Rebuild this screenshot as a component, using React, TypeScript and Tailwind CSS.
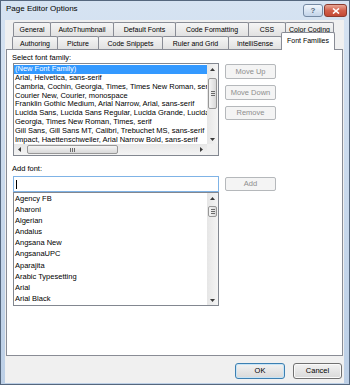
import React from "react";

function Tri({ dir }: { dir: "up" | "down" | "left" | "right" }) {
  if (dir === "up")
    return (
      <svg width="5" height="3" viewBox="0 0 5 3">
        <polygon points="0,3 2.5,0 5,3" fill="#3a3a3a" />
      </svg>
    );
  if (dir === "down")
    return (
      <svg width="5" height="3" viewBox="0 0 5 3">
        <polygon points="0,0 2.5,3 5,0" fill="#3a3a3a" />
      </svg>
    );
  if (dir === "left")
    return (
      <svg width="3" height="5" viewBox="0 0 3 5">
        <polygon points="3,0 0,2.5 3,5" fill="#3a3a3a" />
      </svg>
    );
  return (
    <svg width="3" height="5" viewBox="0 0 3 5">
      <polygon points="0,0 3,2.5 0,5" fill="#3a3a3a" />
    </svg>
  );
}

function VGrip() {
  return (
    <div className="flex flex-col gap-[1px]">
      <div className="w-[4px] h-px bg-[#6b6b6b]" />
      <div className="w-[4px] h-px bg-[#6b6b6b]" />
      <div className="w-[4px] h-px bg-[#6b6b6b]" />
    </div>
  );
}

function HGrip() {
  return (
    <div className="flex gap-[1px]">
      <div className="w-px h-[4px] bg-[#6b6b6b]" />
      <div className="w-px h-[4px] bg-[#6b6b6b]" />
      <div className="w-px h-[4px] bg-[#6b6b6b]" />
    </div>
  );
}

const families = [
  "(New Font Family)",
  "Arial, Helvetica, sans-serif",
  "Cambria, Cochin, Georgia, Times, Times New Roman, serif",
  "Courier New, Courier, monospace",
  "Franklin Gothic Medium,  Arial Narrow, Arial, sans-serif",
  "Lucida Sans, Lucida Sans Regular, Lucida Grande, Lucida Sans Unicode, Verdana, sans-serif",
  "Georgia, Times New Roman, Times, serif",
  "Gill Sans, Gill Sans MT, Calibri, Trebuchet MS, sans-serif",
  "Impact, Haettenschweiler, Arial Narrow Bold, sans-serif",
  "Tahoma, Geneva, sans-serif",
];

const fonts = [
  "Agency FB",
  "Aharoni",
  "Algerian",
  "Andalus",
  "Angsana New",
  "AngsanaUPC",
  "Aparajita",
  "Arabic Typesetting",
  "Arial",
  "Arial Black",
  "Arial Narrow",
];

function Tab({ label, cls }: { label: string; cls: string }) {
  return (
    <div
      className={
        "h-full -ml-px first:ml-0 border-x border-t border-[#898c95] rounded-t-[2px] bg-gradient-to-b from-[#f5f5f5] to-[#e1e1e1] flex items-center justify-center text-[7px] leading-none whitespace-nowrap overflow-hidden " +
        cls
      }
    >
      {label}
    </div>
  );
}

function DisBtn({ label, cls }: { label: string; cls: string }) {
  return (
    <div
      className={
        "w-[51px] border border-[#b5b8bb] rounded-[2px] bg-[#f4f4f4] flex items-center justify-center text-[7.5px] leading-none text-[#8e8e8e] " +
        cls
      }
    >
      {label}
    </div>
  );
}

export default function App() {
  return (
    <div className="w-[350px] h-[385px] flex flex-col border border-[#55677e] bg-gradient-to-b from-[#d6e3f2] to-[#bccfe6] font-['Liberation_Sans',Arial,sans-serif] text-black overflow-hidden">
      {/* Title bar */}
      <div className="h-[19px] flex items-start pl-[5px] pr-[2px]">
        <div className="flex-1 text-[8px] leading-[16px]">Page Editor Options</div>
        <div className="mt-[3px] flex gap-[1px]">
          <div className="w-[20px] h-[13px] rounded-[3px] border border-[#7589a3] bg-gradient-to-b from-[#f1f6fc] to-[#c3d4e9] flex items-center justify-center text-[8px] font-bold text-[#56677c] leading-none">
            ?
          </div>
          <div className="w-[23px] h-[13px] rounded-[3px] border border-[#8c3b2f] bg-gradient-to-b from-[#e8a797] via-[#d2604c] to-[#c34935] flex items-center justify-center">
            <svg width="8" height="6" viewBox="0 0 8 6">
              <path d="M1 0.5 L7 5.5 M7 0.5 L1 5.5" stroke="white" strokeWidth="1.6" />
            </svg>
          </div>
        </div>
      </div>

      {/* Body */}
      <div className="flex-1 ml-[4px] mr-[5px] mb-[1px] bg-[#f0f0f0] flex flex-col">
        {/* Tab row 1 */}
        <div className="flex pl-[8px] mt-[2px] h-[14px]">
          <Tab label="General" cls="w-[38px]" />
          <Tab label="AutoThumbnail" cls="w-[64px]" />
          <Tab label="Default Fonts" cls="w-[63px]" />
          <Tab label="Code Formatting" cls="w-[74px]" />
          <Tab label="CSS" cls="w-[38px]" />
          <Tab label="Color Coding" cls="w-[49px]" />
        </div>
        {/* Tab row 2 */}
        <div className="flex items-start pl-[7px] h-[13px]">
          <Tab label="Authoring" cls="w-[46px]" />
          <Tab label="Picture" cls="w-[42px]" />
          <Tab label="Code Snippets" cls="w-[65px]" />
          <Tab label="Ruler and Grid" cls="w-[67px]" />
          <Tab label="IntelliSense" cls="w-[54px]" />
          <div className="relative z-10 -ml-px w-[54px] h-[18px] -mt-[4px] -mb-px bg-white border-x border-t border-[#898c95] rounded-t-[2px] flex items-center justify-center pb-[3px] text-[7px] leading-none whitespace-nowrap">
            Font Families
          </div>
        </div>

        {/* Panel */}
        <div className="ml-[1px] mr-[1px] h-[307px] border border-[#898c95] bg-white flex flex-col pl-[5px]">
          <div className="h-[13px] pt-[2px] text-[7.5px] leading-[11px]">Select font family:</div>
          <div className="flex items-start">
            {/* Family list */}
            <div className="ml-[1px] w-[206px] h-[93px] border border-[#828790] grid grid-cols-[193px_11px] grid-rows-[80px_11px]">
              <div className="overflow-hidden pt-[1px]">
                {families.map((f, i) => (
                  <div
                    key={f}
                    className={
                      i === 0
                        ? "h-[8.85px] leading-[8.85px] text-[7.5px] whitespace-nowrap overflow-hidden pl-[1px] bg-[#3399ff] text-white"
                        : "h-[8.85px] leading-[8.85px] text-[7.5px] whitespace-nowrap overflow-hidden pl-[1px]"
                    }
                  >
                    {f}
                  </div>
                ))}
              </div>
              <div className="flex flex-col bg-gradient-to-r from-[#e6e6e6] to-[#f4f4f4]">
                <div className="h-[10px] flex items-center justify-center">
                  <Tri dir="up" />
                </div>
                <div className="mt-[4px] mx-[1px] h-[31px] rounded-[2px] border border-[#979797] bg-gradient-to-r from-[#f5f5f5] to-[#d9d9d9] flex items-center justify-center">
                  <VGrip />
                </div>
                <div className="flex-1" />
                <div className="h-[10px] flex items-center justify-center">
                  <Tri dir="down" />
                </div>
              </div>
              <div className="flex bg-gradient-to-b from-[#e6e6e6] to-[#f4f4f4]">
                <div className="w-[11px] flex items-center justify-center">
                  <Tri dir="left" />
                </div>
                <div className="ml-[2px] my-[1px] w-[91px] rounded-[2px] border border-[#979797] bg-gradient-to-b from-[#f5f5f5] to-[#d9d9d9] flex items-center justify-center">
                  <HGrip />
                </div>
                <div className="flex-1" />
                <div className="w-[11px] flex items-center justify-center">
                  <Tri dir="right" />
                </div>
              </div>
              <div className="bg-[#f0f0f0]" />
            </div>
            {/* Buttons */}
            <div className="ml-[6px] mt-[1px] flex flex-col gap-[6px]">
              <DisBtn label="Move Up" cls="h-[15px]" />
              <DisBtn label="Move Down" cls="h-[15px]" />
              <DisBtn label="Remove" cls="h-[14px]" />
            </div>
          </div>

          <div className="h-[20px] pt-[8px] text-[7.5px] leading-[10px]">Add font:</div>
          <div className="flex items-start">
            <div className="ml-[1px] flex flex-col">
              <div className="w-[206px] h-[16px] border border-[#7fb3e6] bg-white flex items-center">
                <div className="ml-[2px] w-px h-[9px] bg-black" />
              </div>
              <div className="w-[206px] h-[114px] border border-[#828790] flex">
                <div className="flex-1 overflow-hidden">
                  {fonts.map((f) => (
                    <div key={f} className="h-[11.1px] leading-[11.1px] text-[7.5px] whitespace-nowrap pl-[1px]">
                      {f}
                    </div>
                  ))}
                </div>
                <div className="w-[11px] flex flex-col bg-gradient-to-r from-[#e6e6e6] to-[#f4f4f4]">
                  <div className="h-[11px] flex items-center justify-center">
                    <Tri dir="up" />
                  </div>
                  <div className="mt-[2px] mx-[1px] h-[11px] rounded-[2px] border border-[#979797] bg-gradient-to-r from-[#f5f5f5] to-[#d9d9d9] flex items-center justify-center">
                    <VGrip />
                  </div>
                  <div className="flex-1" />
                  <div className="h-[10px] flex items-center justify-center">
                    <Tri dir="down" />
                  </div>
                </div>
              </div>
            </div>
            <div className="ml-[6px] mt-[1px] flex flex-col">
              <DisBtn label="Add" cls="h-[14px]" />
            </div>
          </div>
        </div>

        {/* Bottom buttons */}
        <div className="mt-[7px] flex justify-end gap-[8px] pr-[2px]">
          <div className="w-[50px] h-[16px] rounded-[3px] border border-[#3c7fb1] bg-gradient-to-b from-[#f2f2f2] to-[#d9d9d9] shadow-[inset_0_0_0_1px_#c6e4f7] flex items-center justify-center text-[7.5px] leading-none">
            OK
          </div>
          <div className="w-[49px] h-[16px] rounded-[3px] border border-[#707070] bg-gradient-to-b from-[#f2f2f2] to-[#d9d9d9] shadow-[inset_0_0_0_1px_#fafafa] flex items-center justify-center text-[7.5px] leading-none">
            Cancel
          </div>
        </div>
      </div>
    </div>
  );
}
